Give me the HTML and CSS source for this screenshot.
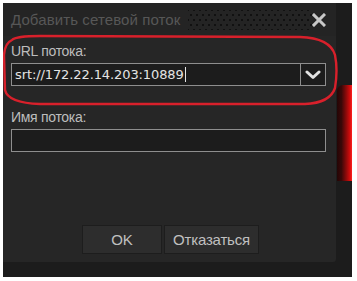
FILE: index.html
```html
<!DOCTYPE html>
<html lang="ru">
<head>
<meta charset="utf-8">
<title>Добавить сетевой поток</title>
<link rel="stylesheet" href="styles.css">
</head>
<body>
<div class="frame">
  <div class="dialog">
    <div class="titlebar">
      <span class="title">Добавить сетевой поток</span>
      <span class="grip"></span>
      <svg class="close" width="14" height="14" viewBox="0 0 14 14"><path d="M2 2 L12 12 M12 2 L2 12" stroke="#c8c8c8" stroke-width="3" stroke-linecap="square"/></svg>
    </div>
    <div class="body">
      <div class="label">URL потока:</div>
      <div class="input combo">
        <div class="value">srt://172.22.14.203:10889<span class="caret"></span></div>
        <div class="drop"><svg width="16" height="10" viewBox="0 0 16 10"><path d="M2 2 L8 7.5 L14 2" fill="none" stroke="#e2e2e2" stroke-width="3" stroke-linecap="round" stroke-linejoin="round"/></svg></div>
      </div>
      <div class="label second">Имя потока:</div>
      <div class="input"></div>
    </div>
    <div class="buttons">
      <div class="btn ok">OK</div>
      <div class="btn cancel">Отказаться</div>
    </div>
  </div>
  <div class="side"><div class="glow"></div></div>
  <svg class="mark" width="349" height="274" viewBox="3 3 349 274"><path d="M12 40 Q16 36 40 36 L300 37 Q330 38 335 55 Q338 70 335 88 Q330 103 305 104 L40 104 Q8 103 5 90 L4 55 Q5 43 12 40 Z" fill="none" stroke="#d8202b" stroke-width="2.4"/></svg>
</div>
</body>
</html>
```
FILE: styles.css
```css
html, body {
  margin: 0;
  padding: 0;
  background: #ffffff;
}
body {
  padding: 3px 5px 4px 3px;
  font-family: "Liberation Sans", Arial, sans-serif;
}
.frame {
  position: relative;
  width: 349px;
  height: 274px;
  background: #1c1c1c;
  display: flex;
  align-items: flex-start;
}
.dialog {
  width: 333px;
  height: 259px;
  background: #262626;
  display: flex;
  flex-direction: column;
  border-bottom-right-radius: 3px;
}
.titlebar {
  height: 33px;
  display: flex;
  align-items: center;
  padding: 0 10px 0 8px;
  background: #242424;
}
.title {
  font-size: 15px;
  color: #575757;
  letter-spacing: 0.1px;
  white-space: nowrap;
}
.grip {
  width: 124px;
  height: 20px;
  margin-left: 8px;
  background-image:
    radial-gradient(circle at 50% 50%, #111111 0, #111111 1px, transparent 1.4px),
    radial-gradient(circle at 50% 50%, #111111 0, #111111 1px, transparent 1.4px);
  background-size: 6px 10px, 6px 10px;
  background-position: 0 0, 3px 5px;
}
.close {
  margin-left: auto;
  display: block;
}
.body {
  padding: 7px 10px 0 8px;
  display: flex;
  flex-direction: column;
}
.label {
  font-size: 14px;
  line-height: 16px;
  color: #bdbdbd;
  letter-spacing: -0.3px;
  margin-bottom: 4px;
}
.label.second {
  margin-top: 23px;
}
.input {
  height: 21px;
  border: 1px solid #8e8e8e;
  background: #1c1c1c;
  display: flex;
}
.value {
  flex: 1;
  font-family: "DejaVu Sans", sans-serif;
  font-size: 13px;
  letter-spacing: -0.1px;
  color: #e4e4e4;
  padding-left: 3px;
  line-height: 23px;
  display: flex;
  align-items: center;
}
.caret {
  width: 1px;
  height: 15px;
  background: #e4e4e4;
  margin-left: 1px;
}
.drop {
  width: 24px;
  border-left: 1px solid #8e8e8e;
  display: flex;
  align-items: center;
  justify-content: center;
}
.drop svg {
  display: block;
}
.buttons {
  margin-top: auto;
  margin-bottom: 8px;
  display: flex;
  justify-content: center;
  gap: 2px;
  padding-left: 2px;
}
.btn {
  height: 27px;
  border: 1px solid #1d1d1d;
  background: #2d2d2d;
  color: #c0c0c0;
  font-size: 15px;
  line-height: 27px;
  text-align: center;
  letter-spacing: -0.2px;
}
.ok {
  width: 78px;
}
.cancel {
  width: 93px;
}
.side {
  width: 16px;
  height: 274px;
  display: flex;
  flex-direction: column;
}
.glow {
  margin-top: 82px;
  height: 96px;
  margin-left: 1px;
  border-top-left-radius: 6px;
  background: linear-gradient(to right, #240606 0%, #3a0808 30%, #8a0a0a 60%, #d00c0c 85%, #ff2020 100%);
}
.mark {
  position: absolute;
  left: 0;
  top: 0;
  pointer-events: none;
}
```
